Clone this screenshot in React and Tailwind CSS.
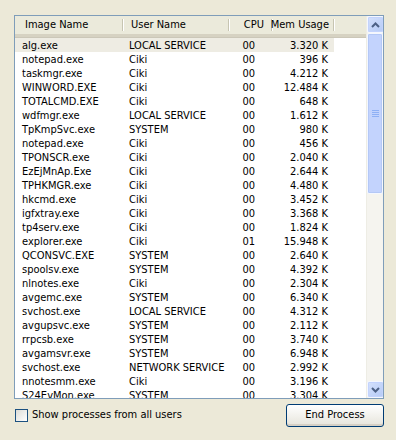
import React from 'react';

const rows = [
  ['alg.exe', 'LOCAL SERVICE', '00', '3.320 K'],
  ['notepad.exe', 'Ciki', '00', '396 K'],
  ['taskmgr.exe', 'Ciki', '00', '4.212 K'],
  ['WINWORD.EXE', 'Ciki', '00', '12.484 K'],
  ['TOTALCMD.EXE', 'Ciki', '00', '648 K'],
  ['wdfmgr.exe', 'LOCAL SERVICE', '00', '1.612 K'],
  ['TpKmpSvc.exe', 'SYSTEM', '00', '980 K'],
  ['notepad.exe', 'Ciki', '00', '456 K'],
  ['TPONSCR.exe', 'Ciki', '00', '2.040 K'],
  ['EzEjMnAp.Exe', 'Ciki', '00', '2.644 K'],
  ['TPHKMGR.exe', 'Ciki', '00', '4.480 K'],
  ['hkcmd.exe', 'Ciki', '00', '3.452 K'],
  ['igfxtray.exe', 'Ciki', '00', '3.368 K'],
  ['tp4serv.exe', 'Ciki', '00', '1.824 K'],
  ['explorer.exe', 'Ciki', '01', '15.948 K'],
  ['QCONSVC.EXE', 'SYSTEM', '00', '2.640 K'],
  ['spoolsv.exe', 'SYSTEM', '00', '4.392 K'],
  ['nlnotes.exe', 'Ciki', '00', '2.304 K'],
  ['avgemc.exe', 'SYSTEM', '00', '6.340 K'],
  ['svchost.exe', 'LOCAL SERVICE', '00', '4.312 K'],
  ['avgupsvc.exe', 'SYSTEM', '00', '2.112 K'],
  ['rrpcsb.exe', 'SYSTEM', '00', '3.740 K'],
  ['avgamsvr.exe', 'SYSTEM', '00', '6.948 K'],
  ['svchost.exe', 'NETWORK SERVICE', '00', '2.992 K'],
  ['nnotesmm.exe', 'Ciki', '00', '3.196 K'],
  ['S24EvMon.exe', 'SYSTEM', '00', '3.304 K'],
];

function Divider() {
  return (
    <div className="h-full py-[3px] flex shrink-0">
      <div className="w-px bg-[#c7c5b2]" />
      <div className="w-px bg-white" />
    </div>
  );
}

function ArrowButton({ up }) {
  return (
    <div className="h-[17px] w-[17px] shrink-0 rounded-[2px] border border-[#f4f7fe] bg-gradient-to-br from-[#d5e1fc] to-[#b5caf6] flex items-center justify-center shadow-[inset_0_0_0_1px_#c3d3fd]">
      <svg width="9" height="6" viewBox="0 0 9 6">
        <path
          d={up ? 'M1 5 L4.5 1.5 L8 5' : 'M1 1 L4.5 4.5 L8 1'}
          stroke="#4d6185"
          strokeWidth="2"
          fill="none"
        />
      </svg>
    </div>
  );
}

export default function App() {
  return (
    <div className="w-[396px] h-[440px] bg-[#ece9d8] pl-[14px] pt-[15px] font-['DejaVu_Sans_Condensed','DejaVu_Sans',sans-serif] text-[11px] text-black [font-stretch:condensed]">
      {/* List view */}
      <div className="w-[370px] h-[384px] border border-[#7f9db9] bg-white flex overflow-hidden">
        <div className="flex-1 flex flex-col overflow-hidden">
          {/* Header */}
          <div className="h-[21px] flex shrink-0 bg-[#ebeadb] border-b-[3px] border-[#d6d2c2] shadow-[0_1px_0_#cbc7b8] whitespace-nowrap">
            <div className="w-[107px] shrink-0 pl-[10px] flex items-center">Image Name</div>
            <Divider />
            <div className="w-[104px] shrink-0 pl-[7px] flex items-center">User Name</div>
            <Divider />
            <div className="w-[41px] shrink-0 pr-[7px] flex items-center justify-end">CPU</div>
            <Divider />
            <div className="w-[60px] shrink-0 pr-[4px] flex items-center justify-end">Mem Usage</div>
            <Divider />
            <div className="flex-1" />
          </div>
          {/* Rows */}
          <div className="flex flex-col mt-px">
            {rows.map((r, i) => (
              <div
                key={i}
                className={`h-[14px] w-[319px] flex items-center shrink-0 leading-none whitespace-nowrap ${
                  i === 0 ? 'bg-[#eeece3]' : ''
                }`}
              >
                <div className="w-[107px] pl-[7px]">{r[0]}</div>
                <div className="w-[106px] pl-[7px]">{r[1]}</div>
                <div className="w-[43px] pr-[16px] text-right">{r[2]}</div>
                <div className="w-[63px] pr-[6px] text-right">{r[3]}</div>
              </div>
            ))}
          </div>
        </div>

        {/* Scrollbar */}
        <div className="w-[17px] flex flex-col bg-[#f5f4ef] border-l border-[#eeede5]">
          <ArrowButton up />
          <div className="flex-1 flex flex-col">
            <div className="h-[161px] rounded-[2px] border border-[#f4f7fe] bg-[#c3d3fd] shadow-[inset_0_0_0_1px_#b4c8f6] flex flex-col items-center justify-center gap-px">
              <div className="w-[7px] h-px bg-[#8eb0f5]" />
              <div className="w-[7px] h-px bg-[#8eb0f5]" />
              <div className="w-[7px] h-px bg-[#8eb0f5]" />
              <div className="w-[7px] h-px bg-[#8eb0f5]" />
            </div>
          </div>
          <ArrowButton />
        </div>
      </div>

      {/* Footer */}
      <div className="w-[370px] mt-[5px] flex items-center justify-between">
        <label className="flex items-center gap-[4px] ml-px">
          <span className="w-[13px] h-[13px] border border-[#1c5180] bg-gradient-to-br from-[#dcdcd7] to-white" />
          <span>Show processes from all users</span>
        </label>
        <button className="w-[98px] h-[23px] rounded-[3px] border border-[#003c74] bg-gradient-to-b from-white to-[#e6e4db] shadow-[inset_0_-2px_0_#d6d0c5]">
          End Process
        </button>
      </div>
    </div>
  );
}
